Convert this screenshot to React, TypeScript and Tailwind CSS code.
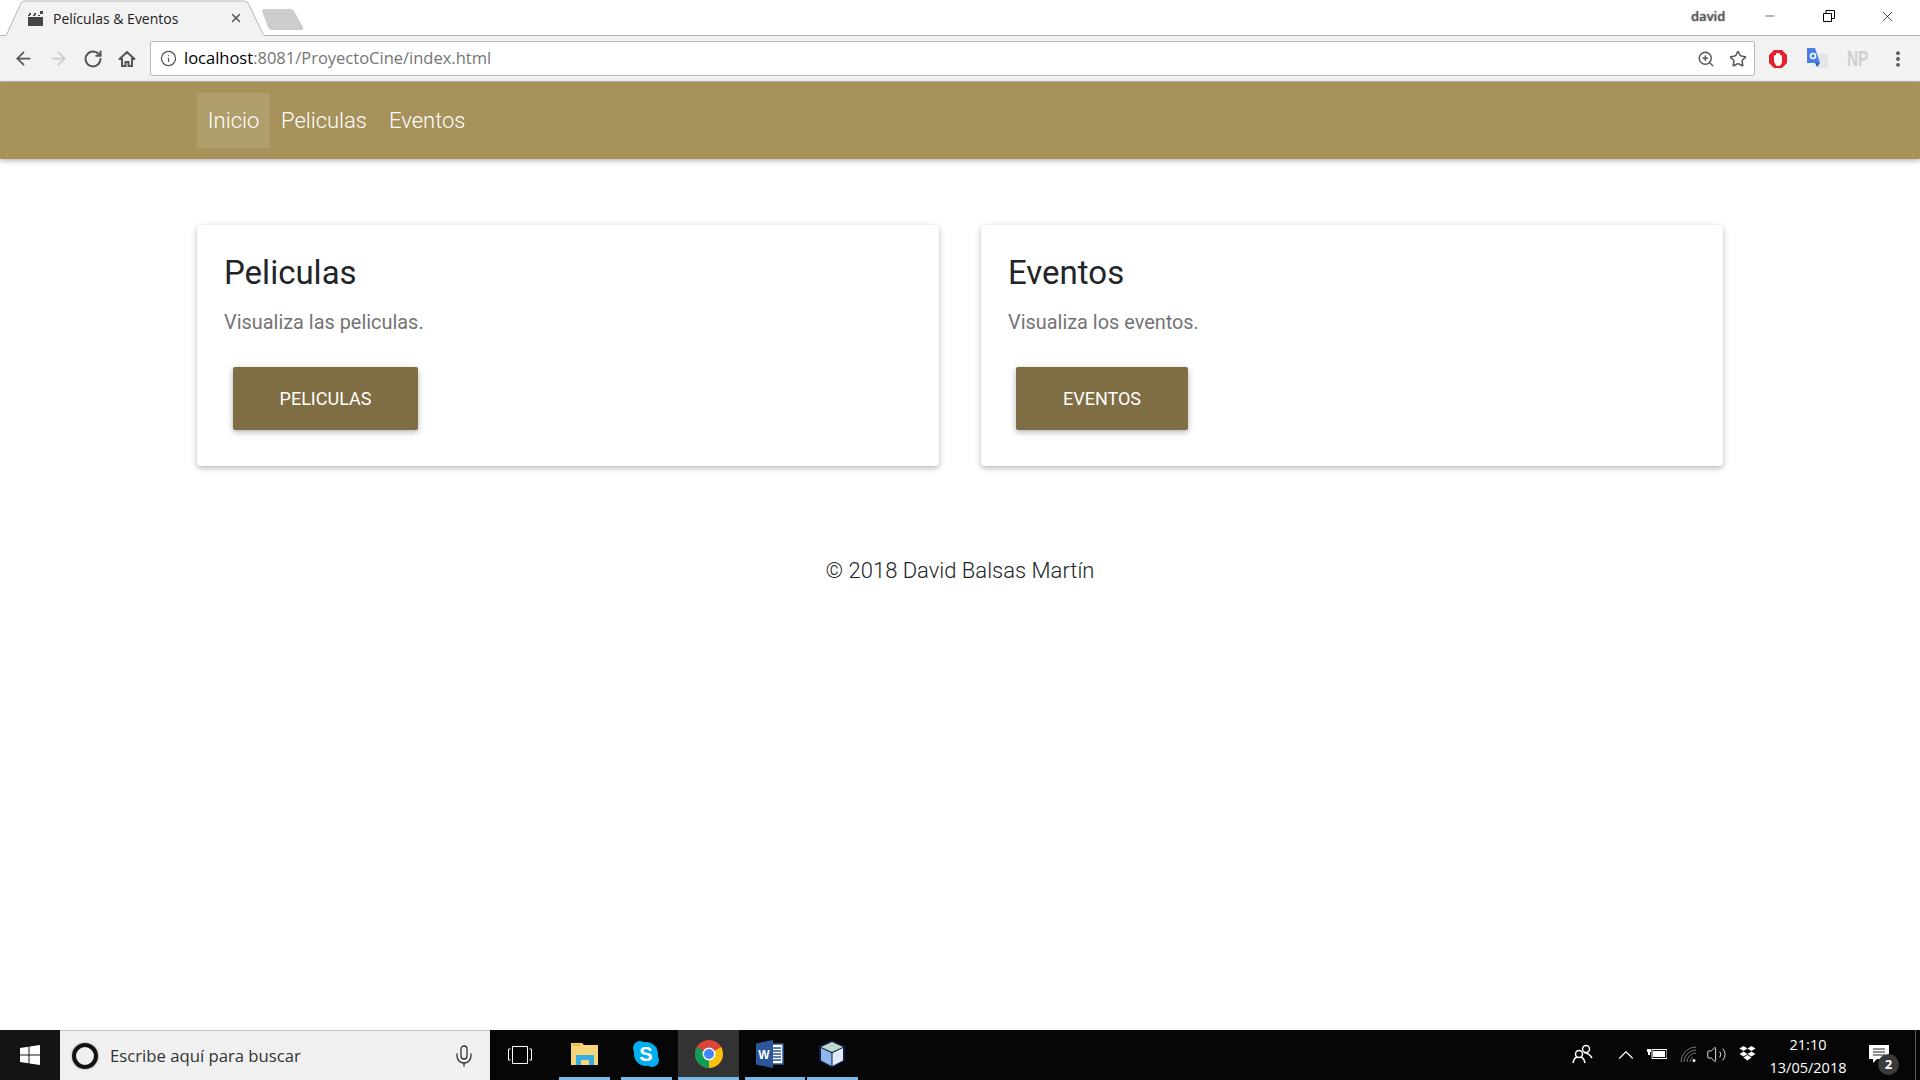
import React from 'react';
import { ArrowLeft, ArrowRight, RotateCw, Info, ZoomIn, Star, X, Minus, Mic, ChevronUp, Volume2, EllipsisVertical } from 'lucide-react';

const cards = [
  { title: 'Peliculas', text: 'Visualiza las peliculas.', button: 'PELICULAS', width: 'w-[185px] ml-[9px]' },
  { title: 'Eventos', text: 'Visualiza los eventos.', button: 'EVENTOS', width: 'w-[172px] ml-[8px]' },
];

// Browser tab with the slanted sides
const TabBar = () => (
  <div className="relative h-[36px] bg-white border-b border-[#b4b4b4] font-['Open_Sans',sans-serif]">
    <svg className="absolute left-0 top-0" width="310" height="36" viewBox="0 0 310 36">
      <path d="M6 36 L21 3 Q22 1 25 1 L243 1 Q247 1 248 3 L264 36 Z" fill="#f2f2f2" stroke="#b4b4b4" />
      <path d="M6 35.5 L264 35.5" stroke="#f2f2f2" />
      <path d="M262 11 Q262 9 265 9 L290 9 Q293 9 294 11 L303 27 Q304 30 301 30 L272 30 Q269 30 268 27 Z" fill="#cdcdcd" />
      <path d="M28 17 h15 v9 h-15 Z" fill="#444" />
      <path d="M28 15 h2 v1 h-2 Z M33 15 h2 v1 h-2 Z M38 15 h2 v1 h-2 Z M29 13 h2 v2 h-2 Z M34 13 h2 v2 h-2 Z M40 11 h3 v3 h-3 Z" fill="#444" />
    </svg>
    <span className="absolute left-[53px] top-[9px] text-[14px] leading-[19px] text-[#222]">Películas &amp; Eventos</span>
    <X className="absolute left-[229px] top-[11px] text-[#555]" size={14} strokeWidth={2.5} />
    <span className="absolute left-[1691px] top-[7px] text-[13px] leading-[18px] text-[#555] font-semibold [text-shadow:0_0_2px_#999]">david</span>
    <div className="absolute right-[3px] top-0 flex items-center h-[32px] text-black">
      <div className="w-[59px] flex justify-center"><Minus size={14} strokeWidth={1} /></div>
      <div className="w-[59px] flex justify-center">
        <svg width="12" height="12" viewBox="0 0 12 12" fill="none" stroke="black">
          <path d="M0.5 3.5 h8 v8 h-8 Z M3 3 V0.5 h8.5 v8 H9" />
        </svg>
      </div>
      <div className="w-[59px] flex justify-center"><X size={17} strokeWidth={1} /></div>
    </div>
  </div>
);

const Toolbar = () => (
  <div className="h-[46px] bg-[#f2f2f2] flex items-center border-b border-[#b4b4b4]">
    <div className="w-[150px] flex items-center">
      <ArrowLeft className="ml-[13px] text-[#555]" size={21} strokeWidth={2} />
      <ArrowRight className="ml-[14px] text-[#ccc]" size={21} strokeWidth={2} />
      <RotateCw className="ml-[14px] text-[#555]" size={20} strokeWidth={2.4} />
      <svg className="ml-[15px] text-[#555]" width="18" height="18" viewBox="0 0 18 18" fill="none" stroke="currentColor" strokeWidth="2">
        <path d="M1 9.500 L9 2 L17 9.500 M4 8 V16 H7.500 V12 H10.500 V16 H14 V8" />
      </svg>
    </div>
    <div className="w-[1605px] h-[35px] bg-white border border-[#b9b9b9] rounded-[2px] flex items-center font-['Open_Sans',sans-serif]">
      <Info className="ml-[9px] text-[#555]" size={17} strokeWidth={1.8} />
      <span className="ml-[7px] text-[16.5px] text-black">localhost<span className="text-[#757575]">:8081/ProyectoCine/index.html</span></span>
      <ZoomIn className="ml-auto text-[#555]" size={18} strokeWidth={1.8} />
      <Star className="ml-[14px] mr-[7px] text-[#555]" size={18} strokeWidth={2} />
    </div>
    <div className="flex-1 flex items-center">
      <svg className="ml-[13px]" width="20" height="20" viewBox="0 0 20 20">
        <path d="M6 1 h8 l5 5 v8 l-5 5 h-8 l-5 -5 v-8 Z" fill="#e4202c" />
        <path d="M6 12 V7 a1 1 0 0 1 2 0 V5 a1 1 0 0 1 2 0 a1 1 0 0 1 2 0 V7 a1 1 0 0 1 2 0 V12 Q14 17 10 17 Q7 17 6 12 Z" fill="white" />
      </svg>
      <svg className="ml-[19px]" width="21" height="21" viewBox="0 0 21 21">
        <path d="M8 6 h13 v14 h-10 Z" fill="#e4e4e4" />
        <path d="M0 0 h8 l5 15 h-13 Z" fill="#4a7fe8" />
        <path d="M8 15 h5 l-3 4 Z" fill="#2a56c6" />
        <circle cx="6" cy="8" r="2.500" fill="none" stroke="white" strokeWidth="1.500" />
      </svg>
      <span className="ml-[19px] w-[20px] text-[22px] leading-none font-bold text-[#cfcfcf] font-['Liberation_Sans',sans-serif] scale-x-70 origin-left">NP</span>
      <EllipsisVertical className="ml-[21px] text-[#555]" size={20} strokeWidth={2.6} />
    </div>
  </div>
);

const Navbar = () => (
  <nav className="h-[77px] bg-[#a6925a] shadow-[0_2px_5px_rgba(0,0,0,0.28)] pl-[197px] flex items-center relative font-['Roboto',sans-serif] font-light text-[22px] text-white">
    <a className="h-[55px] w-[73px] bg-white/10 flex items-center justify-center">Inicio</a>
    <a className="ml-[11px]">Peliculas</a>
    <a className="ml-[22px]">Eventos</a>
  </nav>
);

const Card = ({ title, text, button, width }: (typeof cards)[number]) => (
  <div className="h-[241px] bg-white rounded-[4px] shadow-[0_2px_5px_rgba(0,0,0,0.2),0_2px_10px_rgba(0,0,0,0.1)] pt-[29px] px-[27px]">
    <h4 className="text-[33px] leading-[38px] text-[#212529]">{title}</h4>
    <p className="mt-[16px] text-[19.9px] leading-[30px] text-[#747373]">{text}</p>
    <button className={`mt-[29px] ${width} h-[63px] rounded-[2px] bg-[#7f6e43] text-white text-[18px] font-normal shadow-[0_2px_5px_rgba(0,0,0,0.2),0_2px_10px_rgba(0,0,0,0.12)]`}>
      {button}
    </button>
  </div>
);

const WindowsLogo = () => (
  <svg width="20" height="20" viewBox="0 0 20 20" fill="white">
    <path d="M0 3 L8.500 1.800 V9.500 H0 Z M9.500 1.600 L20 0 V9.500 H9.500 Z M0 10.500 H8.500 V18.200 L0 17 Z M9.500 10.500 H20 V20 L9.500 18.400 Z" />
  </svg>
);

const TaskIcon = ({ className, children }: { className: string; children: React.ReactNode }) => (
  <div className={`${className} flex items-center justify-center border-b-[3px] border-[#76b9ed]`}>{children}</div>
);

const Taskbar = () => (
  <div className="h-[50px] bg-[#060606] flex items-stretch text-white font-['Open_Sans',sans-serif]">
    <div className="w-[60px] bg-[#141414] flex items-center justify-center"><WindowsLogo /></div>
    <div className="w-[430px] bg-[#f0f0f0] border-t border-[#c4c4c4] flex items-center">
      <div className="ml-[12px] w-[26px] h-[26px] rounded-full border-[4px] border-[#111] shadow-[0_0_2px_#666]" />
      <span className="ml-[12px] text-[16.7px] text-[#333]">Escribe aquí para buscar</span>
      <Mic className="ml-auto mr-[14px] text-[#333]" size={24} strokeWidth={1.3} />
    </div>
    <div className="w-[59px] flex items-center justify-center">
      <svg width="24" height="18" viewBox="0 0 24 18" fill="none" stroke="white" strokeWidth="1">
        <path d="M4.500 .5 h15 v17 h-15 Z M2.500 3 h-2 v11 h2 M21.500 3 h2 v11 h-2" />
      </svg>
    </div>
    <div className="w-[10px]" />
    <TaskIcon className="w-[51px]">
      <svg width="28" height="24" viewBox="0 0 28 24">
        <path d="M0 1 h11 l2 2 h14 v20 h-27 Z" fill="#f5d67b" />
        <path d="M5 23 v-10 h18 v10 h-5 v-5 h-8 v5 Z" fill="#36aee2" />
        <path d="M1 2 h9 v2 h-9 Z" fill="#e8b93c" />
      </svg>
    </TaskIcon>
    <div className="w-[11px]" />
    <TaskIcon className="w-[51px] pr-[2px]">
      <svg width="28" height="28" viewBox="0 0 28 28">
        <circle cx="14" cy="14" r="12" fill="#00aff0" />
        <circle cx="8" cy="8" r="7" fill="#00aff0" />
        <circle cx="20" cy="20" r="7" fill="#00aff0" />
        <text x="14" y="21" textAnchor="middle" fontSize="20" fontWeight="700" fill="white" fontFamily="Liberation Sans">S</text>
      </svg>
    </TaskIcon>
    <div className="w-[6px]" />
    <TaskIcon className="w-[61px] bg-[#333333]">
      <svg width="28" height="28" viewBox="0 0 28 28">
        <circle cx="14" cy="14" r="14" fill="#db4437" />
        <path d="M14 14 L26.100 7 A14 14 0 0 1 14 28 Z" fill="#f4c20d" />
        <path d="M14 14 L14 28 A14 14 0 0 1 1.900 7 Z" fill="#0f9d58" />
        <circle cx="14" cy="14" r="6.500" fill="white" />
        <circle cx="14" cy="14" r="5" fill="#4285f4" />
      </svg>
    </TaskIcon>
    <div className="w-[6px]" />
    <TaskIcon className="w-[60px] pr-[10px]">
      <svg width="28" height="28" viewBox="0 0 28 28">
        <path d="M12 4 h15 v20 h-15 Z" fill="white" stroke="#2b579a" strokeWidth="1.500" />
        <path d="M16 8 h9 M16 11 h9 M16 14 h9 M16 17 h9 M16 20 h9" stroke="#2b579a" strokeWidth="1.500" />
        <path d="M0 3.500 L17 0 V28 L0 24.500 Z" fill="#2b579a" />
        <text x="8" y="19" textAnchor="middle" fontSize="12" fontWeight="700" fill="white" fontFamily="Liberation Sans">W</text>
      </svg>
    </TaskIcon>
    <div className="w-[2px]" />
    <TaskIcon className="w-[51px] pr-[2px]">
      <svg width="28" height="30" viewBox="0 0 28 30">
        <path d="M14 1 L27 7 V22 L14 29 L1 22 V7 Z" fill="#141a40" />
        <path d="M14 3 L25 8 L14 13 L3 8 Z" fill="#bcdccf" />
        <path d="M3 9 L13.500 14 V27 L3 21.500 Z" fill="#8fb6e8" />
        <path d="M25 9 L14.500 14 V27 L25 21.500 Z" fill="#dfe9f7" />
      </svg>
    </TaskIcon>
    <div className="ml-auto w-[380px] relative">
      <svg className="absolute left-[32px] top-[14px]" width="22" height="20" viewBox="0 0 22 20" fill="none" stroke="white" strokeWidth="1.500">
        <circle cx="14" cy="5" r="3.500" /><circle cx="7" cy="10" r="3.500" />
        <path d="M1 19 Q2 14 5 13 M9 13 Q12 14 13 19 M12 8.500 Q17 9 20 14" />
      </svg>
      <ChevronUp className="absolute left-[73px] top-[12px]" size={26} strokeWidth={1} />
      <svg className="absolute left-[107px] top-[17px]" width="20" height="14" viewBox="0 0 20 14" fill="white">
        <path d="M5 2.500 h15 v9 h-15 Z" fill="none" stroke="white" /><path d="M6 4 h12 v6 h-12 Z" />
        <path d="M0 2 h4 v3 h-1 v3 h-2 v-3 h-1 Z" />
      </svg>
      <svg className="absolute left-[140px] top-[16px]" width="18" height="17" viewBox="0 0 18 17" fill="none" stroke="#777" strokeWidth="1">
        <path d="M1 16 A15 15 0 0 1 16 1 M4 16 A12 12 0 0 1 16 4 M7 16 A9 9 0 0 1 16 7 M10 16 A6 6 0 0 1 13 11" />
        <circle cx="14" cy="14.500" r="1.500" fill="white" stroke="none" />
      </svg>
      <Volume2 className="absolute left-[166px] top-[14px]" size={21} strokeWidth={1} />
      <svg className="absolute left-[199px] top-[16px]" width="17" height="16" viewBox="0 0 17 16" fill="white">
        <path d="M4.500 0 L8.500 2.500 L4.500 5 L0.500 2.500 Z M12.500 0 L16.500 2.500 L12.500 5 L8.500 2.500 Z M4.500 5.500 L8.500 8 L4.500 10.500 L0.500 8 Z M12.500 5.500 L16.500 8 L12.500 10.500 L8.500 8 Z M8.500 9 L12.500 11.500 L8.500 14.500 L4.500 11.500 Z" />
      </svg>
      <div className="absolute left-[226px] top-[3px] w-[84px] text-center text-[14.5px] leading-[23px]">
        <div>21:10</div>
        <div>13/05/2018</div>
      </div>
      <svg className="absolute left-[329px] top-[15px]" width="20" height="18" viewBox="0 0 20 18" fill="white">
        <path d="M0 0 h20 v14 h-12 l-4 4 v-4 h-4 Z" />
        <path d="M4 4 h12 M4 7 h12 M4 10 h12" stroke="#222" strokeWidth="1" />
      </svg>
      <div className="absolute left-[338px] top-[24px] w-[21px] h-[21px] rounded-full bg-[#3a3a3a] flex items-center justify-center text-[13px] font-bold">2</div>
      <div className="absolute right-[4px] top-0 bottom-0 w-px bg-[#555]" />
    </div>
  </div>
);

export default function App() {
  return (
    <div className="h-screen flex flex-col bg-white overflow-hidden">
      <TabBar />
      <Toolbar />
      <Navbar />
      <main className="flex-1 font-['Roboto',sans-serif]">
        <div className="mt-[66px] px-[197px] grid grid-cols-2 gap-[42px]">
          {cards.map((card) => (
            <Card key={card.title} {...card} />
          ))}
        </div>
        <p className="mt-[88px] text-center text-[22px] leading-[33px] font-light text-[#212529]">© 2018 David Balsas Martín</p>
      </main>
      <Taskbar />
    </div>
  );
}
